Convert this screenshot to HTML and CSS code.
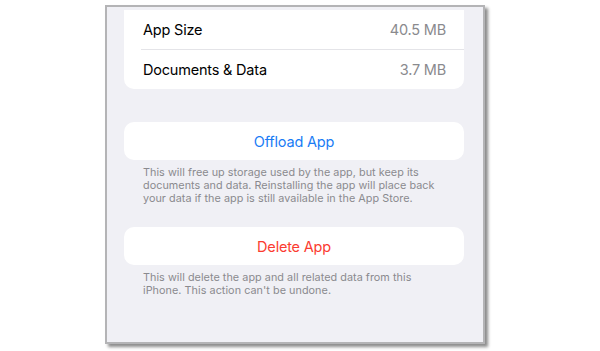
FILE: index.html
```html
<!DOCTYPE html>
<html>
<head>
<meta charset="utf-8">
<link rel="stylesheet" href="styles.css">
</head>
<body>
<div class="frame">
  <div class="card card-top">
    <div class="row">
      <span class="label">App Size</span>
      <span class="value">40.5 MB</span>
    </div>
    <div class="divider"></div>
    <div class="row">
      <span class="label">Documents &amp; Data</span>
      <span class="value">3.7 MB</span>
    </div>
  </div>

  <div class="card button offload">Offload App</div>
  <p class="footer">This will free up storage used by the app, but keep its documents and data. Reinstalling the app will place back your data if the app is still available in the App Store.</p>

  <div class="card button delete">Delete App</div>
  <p class="footer">This will delete the app and all related data from this iPhone. This action can't be undone.</p>
</div>
</body>
</html>
```

FILE: styles.css
```css
html, body {
  margin: 0;
  padding: 0;
  background: #ffffff;
}

body {
  width: 600px;
  height: 351px;
  overflow: hidden;
  font-family: Inter, "Noto Sans", "Liberation Sans", sans-serif;
}

.frame {
  box-sizing: border-box;
  margin: 5px 0 0 105px;
  width: 380px;
  height: 339px;
  border: 2px solid #b4b4b6;
  background: #f0f0f5;
  padding: 3px 19px 0 17px;
  box-shadow: 3px 3px 3px rgba(0, 0, 0, 0.45);
  overflow: hidden;
}

.card {
  background: #ffffff;
  border-radius: 10px;
}

.card-top {
  border-top-left-radius: 0;
  border-top-right-radius: 0;
}

.row {
  height: 39px;
  display: flex;
  align-items: center;
  justify-content: space-between;
  padding: 0 18px 0 19px;
  font-size: 14.5px;
  letter-spacing: -0.2px;
}

.label {
  color: #000000;
}

.value {
  color: #8a8a8e;
}

.divider {
  height: 1px;
  background: #e4e4e8;
  margin-left: 17px;
}

.button {
  height: 38px;
  display: flex;
  align-items: center;
  justify-content: center;
  font-size: 14.5px;
  letter-spacing: -0.2px;
}

.offload {
  margin-top: 33px;
  color: #1a7cf5;
}

.delete {
  margin-top: 22px;
  color: #fb3b30;
}

.footer {
  margin: 0;
  padding: 6px 19px 0 19px;
  font-size: 10.8px;
  line-height: 13px;
  letter-spacing: 0.05px;
  color: #8a8a8e;
}
```
